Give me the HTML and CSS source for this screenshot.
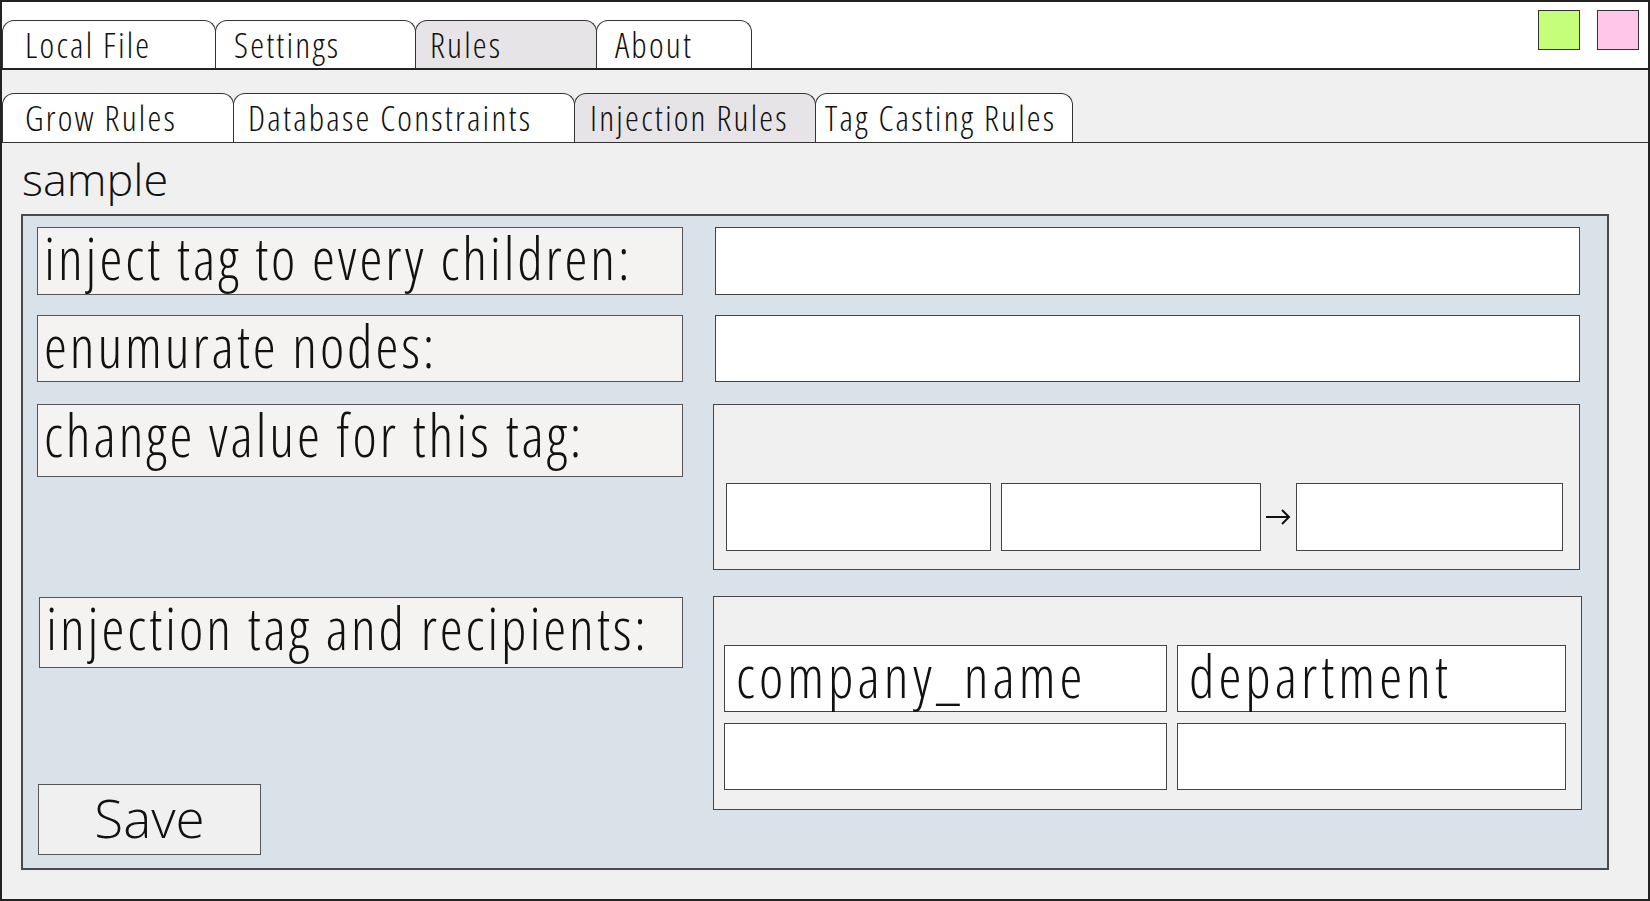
FILE: index.html
```html
<!DOCTYPE html>
<html lang="en">
<head>
  <meta charset="UTF-8" />
  <title>Rules - Injection Rules</title>
  <meta name="viewport" content="width=device-width, initial-scale=1.0" />
  <link rel="stylesheet" href="styles.css">
</head>
<body>
  <div class="window">
    <div class="topbar">
      <div class="tabs">
        <div class="tab tab-local">Local File</div>
        <div class="tab tab-settings">Settings</div>
        <div class="tab tab-rules active">Rules</div>
        <div class="tab tab-about">About</div>
      </div>
      <div class="swatches">
        <span class="swatch green"></span>
        <span class="swatch pink"></span>
      </div>
    </div>

    <div class="subbar">
      <div class="tab sub-grow">Grow Rules</div>
      <div class="tab sub-db">Database Constraints</div>
      <div class="tab sub-inject active">Injection Rules</div>
      <div class="tab sub-cast">Tag Casting Rules</div>
    </div>

    <div class="content">
      <div class="sample">sample</div>

      <div class="panel">
        <div class="labels">
          <div class="label label-1">inject tag to every children:</div>
          <div class="label label-2">enumurate nodes:</div>
          <div class="label label-3">change value for this tag:</div>
          <div class="label label-4">injection tag and recipients:</div>
          <button class="save">Save</button>
        </div>

        <div class="fields">
          <div class="field field-1"></div>
          <div class="field field-2"></div>

          <div class="group change-group">
            <div class="field small from"></div>
            <div class="field small tag"></div>
            <span class="arrow">
              <svg width="26" height="18" viewBox="0 0 26 18">
                <path d="M1 9 H24 M17 2 L24 9 L17 16" fill="none" stroke="#111" stroke-width="2"/>
              </svg>
            </span>
            <div class="field small to"></div>
          </div>

          <div class="group recipients">
            <div class="field cell">company_name</div>
            <div class="field cell">department</div>
            <div class="field cell"></div>
            <div class="field cell"></div>
          </div>
        </div>
      </div>
    </div>
  </div>
</body>
</html>
```
FILE: styles.css
```css
* {
  box-sizing: border-box;
}

body {
  margin: 0;
  font-family: "Open Sans", "Liberation Sans", sans-serif;
  font-weight: 300;
  font-stretch: 75%;
  color: #111;
}

.window {
  width: 1650px;
  height: 901px;
  border: 2px solid #222;
  background: #f0f0f0;
  display: flex;
  flex-direction: column;
}

/* top level tabs */
.topbar {
  height: 68px;
  background: #fff;
  border-bottom: 2px solid #222;
  display: flex;
  justify-content: space-between;
  align-items: flex-start;
}

.tabs {
  display: flex;
  align-self: flex-end;
}

.tab {
  height: 48px;
  padding-left: 20px;
  font-size: 35px;
  line-height: 47px;
  letter-spacing: 2.2px;
  white-space: nowrap;
  background: #fff;
  border: 1px solid #333;
  border-bottom: none;
  border-radius: 12px 12px 0 0;
  margin-left: -1px;
}

.tab:first-child {
  margin-left: 0;
}

.tab.active {
  background: #e6e4e6;
}

.tab-local { width: 214px; padding-left: 22px; }
.tab-settings { width: 201px; padding-left: 18px; }
.tab-rules { width: 182px; padding-left: 14px; }
.tab-about { width: 156px; padding-left: 18px; }

.swatches {
  display: flex;
  gap: 17px;
  padding: 8px 9px 0 0;
}

.swatch {
  width: 42px;
  height: 40px;
  border: 1px solid #333;
}

.swatch.green { background: #c5ff79; }
.swatch.pink { background: #ffc6e9; }

/* second level tabs */
.subbar {
  display: flex;
  padding-top: 23px;
  border-bottom: 1px solid #333;
}

.subbar .tab {
  height: 49px;
  line-height: 48px;
}

.sub-grow { width: 232px; padding-left: 22px; }
.sub-db { width: 342px; padding-left: 14px; }
.sub-inject { width: 242px; padding-left: 15px; }
.sub-cast { width: 258px; padding-left: 9px; }

/* content */
.content {
  padding: 13px 0 0 19px;
}

.sample {
  font-size: 45px;
  font-stretch: 100%;
  line-height: 45px;
  padding-left: 1px;
  margin-bottom: 13px;
}

.panel {
  width: 1588px;
  height: 656px;
  background: #dae2e9;
  border: 2px solid #4a4a4a;
  display: flex;
  gap: 30px;
  padding: 11px 27px 13px 14px;
}

.labels {
  width: 646px;
  display: flex;
  flex-direction: column;
}

.label {
  background: #f5f2f2;
  border: 1px solid #555;
  font-size: 58px;
  line-height: 58px;
  letter-spacing: 2.9px;
  padding: 1px 0 0 6px;
  white-space: nowrap;
}

.label-1 { height: 68px; }
.label-2 { height: 67px; margin-top: 20px; }
.label-3 { height: 73px; margin-top: 22px; }
.label-4 { height: 71px; margin-top: 120px; margin-left: 2px; }

.save {
  margin-top: auto;
  margin-left: 1px;
  width: 223px;
  height: 71px;
  background: #f0f0f0;
  border: 1px solid #555;
  font-family: inherit;
  font-weight: 300;
  font-stretch: 100%;
  font-size: 53px;
  line-height: 53px;
  color: #111;
  padding: 0 0 5px;
}

.fields {
  flex: 1;
  display: flex;
  flex-direction: column;
}

.field {
  background: #fff;
  border: 1px solid #444;
}

.field-1 { height: 68px; margin-left: 2px; }
.field-2 { height: 67px; margin-top: 20px; margin-left: 2px; }

.group {
  background: #f0f0f0;
  border: 1px solid #444;
}

.change-group {
  height: 166px;
  margin-top: 22px;
  display: flex;
  align-items: flex-end;
  padding: 0 16px 18px 12px;
}

.change-group .small {
  height: 68px;
  flex-basis: 0;
}

.change-group .from { flex-grow: 265; }
.change-group .tag { flex-grow: 259; margin-left: 10px; }
.change-group .to { flex-grow: 267; }

.arrow {
  width: 35px;
  height: 68px;
  display: flex;
  align-items: center;
  justify-content: center;
}

.recipients {
  height: 214px;
  margin-top: 26px;
  margin-right: -2px;
  display: grid;
  grid-template-columns: 443px 1fr;
  grid-auto-rows: 67px;
  column-gap: 10px;
  row-gap: 11px;
  padding: 48px 15px 0 10px;
}

.cell {
  font-size: 58px;
  line-height: 60px;
  letter-spacing: 4px;
  padding-left: 11px;
  white-space: nowrap;
}
```
